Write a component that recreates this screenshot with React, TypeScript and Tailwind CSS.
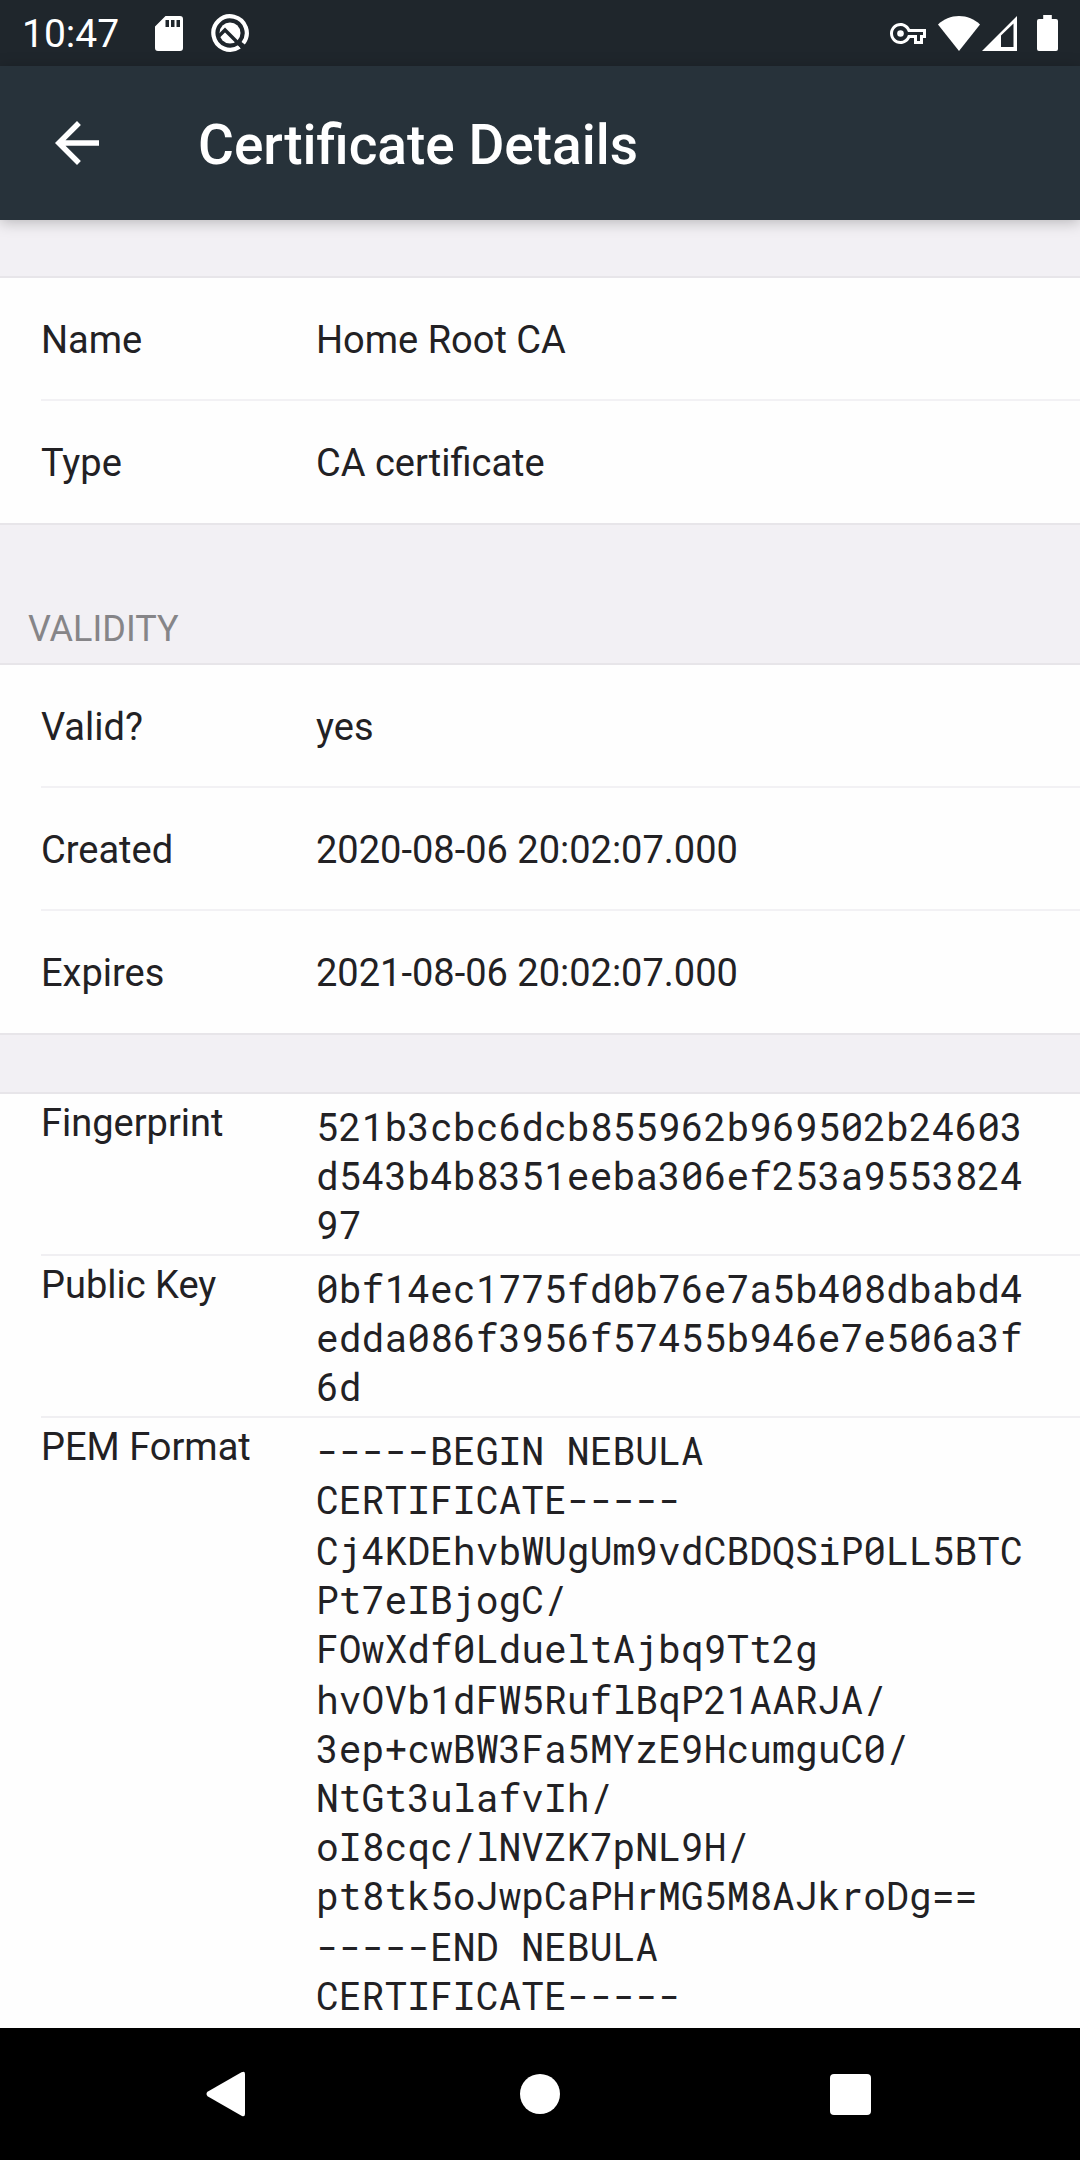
import type { ReactNode } from "react";
import clsx from "clsx";

interface Field {
  label: string;
  value: string;
}

const identity: Field[] = [
  { label: "Name", value: "Home Root CA" },
  { label: "Type", value: "CA certificate" },
];

const validity: Field[] = [
  { label: "Valid?", value: "yes" },
  { label: "Created", value: "2020-08-06 20:02:07.000" },
  { label: "Expires", value: "2021-08-06 20:02:07.000" },
];

// Each block is one line of the source, already wrapped for the value column
const rawData: { label: string; blocks: string[] }[] = [
  {
    label: "Fingerprint",
    blocks: ["521b3cbc6dcb855962b969502b24603\nd543b4b8351eeba306ef253a9553824\n97"],
  },
  {
    label: "Public Key",
    blocks: ["0bf14ec1775fd0b76e7a5b408dbabd4\nedda086f3956f57455b946e7e506a3f\n6d"],
  },
  {
    label: "PEM Format",
    blocks: [
      "-----BEGIN NEBULA\nCERTIFICATE-----",
      "Cj4KDEhvbWUgUm9vdCBDQSiP0LL5BTC\nPt7eIBjogC/\nFOwXdf0LdueltAjbq9Tt2g",
      "hvOVb1dFW5RuflBqP21AARJA/\n3ep+cwBW3Fa5MYzE9HcumguC0/\nNtGt3ulafvIh/\noI8cqc/lNVZK7pNL9H/\npt8tk5oJwpCaPHrMG5M8AJkroDg==",
      "-----END NEBULA\nCERTIFICATE-----",
    ],
  },
];

function StatusBar() {
  return (
    <div className="flex h-[66px] items-center justify-between bg-[#1f262c] px-[22px] text-white">
      <div className="flex items-center">
        <span className="pt-0.5 text-[39px] leading-[44px]">10:47</span>
        <svg width="28" height="35" viewBox="0 0 28 35" className="ml-9" fill="currentColor">
          <path
            fillRule="evenodd"
            d="M10.5 0H25a3 3 0 0 1 3 3v29a3 3 0 0 1-3 3H3a3 3 0 0 1-3-3V10.500zM10.500 4v7h3.500V4zM16 4v7h3.500V4zM21.500 4v7H25V4z"
          />
        </svg>
        <svg width="38" height="38" viewBox="0 0 38 38" className="ml-7">
          <path
            d="M28.600 32.700A16.700 16.700 0 1 1 32.200 29.300"
            fill="none"
            stroke="currentColor"
            strokeWidth="4.200"
          />
          <circle cx="19" cy="19" r="10.500" fill="currentColor" />
          <path
            d="M7.500 22.500L14 16L31 33"
            fill="none"
            stroke="#1f262c"
            strokeWidth="3.400"
          />
        </svg>
      </div>
      <div className="flex items-center">
        <svg width="36" height="21" viewBox="0 5 24 14" className="mr-3" fill="currentColor">
          <path d="M22 19h-6v-4h-2.680c-1.140 2.420-3.600 4-6.320 4-3.860 0-7-3.140-7-7s3.140-7 7-7c2.720 0 5.170 1.580 6.320 4H24v6h-2v4zm-4-2h2v-4h2v-2H11.940l-.23-.67C11.010 8.340 9.110 7 7 7c-2.760 0-5 2.240-5 5s2.240 5 5 5c2.110 0 4.010-1.340 4.710-3.330l.23-.67H18v4z" />
          <circle cx="7" cy="12" r="2.200" />
        </svg>
        <svg width="42" height="35" viewBox="0 0 42 35" className="mr-0.5" fill="currentColor">
          <path d="M0 8.500C5.500 3.200 13 0 21 0s15.500 3.200 21 8.500L21 35z" />
        </svg>
        <svg width="35" height="35" viewBox="0 0 35 35" className="mr-5" fill="currentColor">
          <path fillRule="evenodd" d="M35 0v35H0zM19 19.500v11.500H31.500V7.500z" />
        </svg>
        <svg width="21" height="36" viewBox="0 0 21 36" fill="currentColor">
          <path d="M6.200 0h8.600v4H19a2 2 0 0 1 2 2v28a2 2 0 0 1-2 2H2a2 2 0 0 1-2-2V6a2 2 0 0 1 2-2h4.200z" />
        </svg>
      </div>
    </div>
  );
}

function AppBar() {
  return (
    <header className="flex h-[154px] items-center bg-[#27323a] pl-11 text-white shadow-[0_2px_14px_rgba(0,0,0,0.25)]">
      <button type="button" aria-label="Back" className="mr-[88px]">
        <svg width="66" height="66" viewBox="0 0 24 24" fill="currentColor">
          <path d="M20 11H7.830l5.590-5.590L12 4l-8 8 8 8 1.410-1.410L7.830 13H20v-2z" />
        </svg>
      </button>
      <h1 className="pt-1 text-[55px] font-medium leading-[64px]">Certificate Details</h1>
    </header>
  );
}

function Section({ className, children }: { className?: string; children: ReactNode }) {
  return (
    <dl className={clsx("border-t-2 border-[#e7e5e9] bg-[#fefefe] pl-[41px]", className)}>
      {children}
    </dl>
  );
}

function FieldRow({ field, last }: { field: Field; last: boolean }) {
  return (
    <div
      className={clsx(
        "flex items-center pt-0.5",
        last ? "h-[122px]" : "h-[123px] border-b-2 border-[#f2f1f4]"
      )}
    >
      <dt className="w-[275px] shrink-0">{field.label}</dt>
      <dd>{field.value}</dd>
    </div>
  );
}

function FieldRows({ fields }: { fields: Field[] }) {
  return (
    <Section className="border-b-2">
      {fields.map((field, i) => (
        <FieldRow key={field.label} field={field} last={i === fields.length - 1} />
      ))}
    </Section>
  );
}

function NavBar() {
  return (
    <nav className="flex h-[132px] items-center justify-between bg-black pl-[206px] pr-[209px] text-white">
      <button type="button" aria-label="Back">
        <svg width="44" height="46" viewBox="0 0 44 46" fill="currentColor">
          <path d="M1.500 20.800L35.500 1.200Q39 -.5 39 3V43Q39 46.500 35.500 44.800L1.500 25.200Q-.5 23 1.500 20.800z" />
        </svg>
      </button>
      <button type="button" aria-label="Home" className="size-10 rounded-full bg-white" />
      <button type="button" aria-label="Overview" className="size-[41px] rounded bg-white" />
    </nav>
  );
}

export default function App() {
  return (
    <div className="flex min-h-screen flex-col bg-[#f2f0f4] font-[Roboto,sans-serif] text-[38px] leading-[46px] text-[#222124]">
      <StatusBar />
      <AppBar />
      <main className="flex flex-1 flex-col pt-14">
        <FieldRows fields={identity} />
        <h2 className="px-7 pb-3 pt-[82px] text-[36px] leading-[44px] text-[#868588]">
          VALIDITY
        </h2>
        <FieldRows fields={validity} />
        <Section className="mt-[57px] flex-1">
          {rawData.map((item, i) => (
            <div
              key={item.label}
              className={clsx(
                "flex items-start pt-1.5",
                i < rawData.length - 1 && "border-b-2 border-[#f0eff2] pb-[5px]"
              )}
            >
              <dt className="w-[275px] shrink-0">{item.label}</dt>
              <dd className="flex flex-col gap-0.5 whitespace-pre pt-0.5 font-['Roboto_Mono','Liberation_Mono',monospace] leading-[49px]">
                {item.blocks.map((block) => (
                  <span key={block}>{block}</span>
                ))}
              </dd>
            </div>
          ))}
        </Section>
      </main>
      <NavBar />
    </div>
  );
}
